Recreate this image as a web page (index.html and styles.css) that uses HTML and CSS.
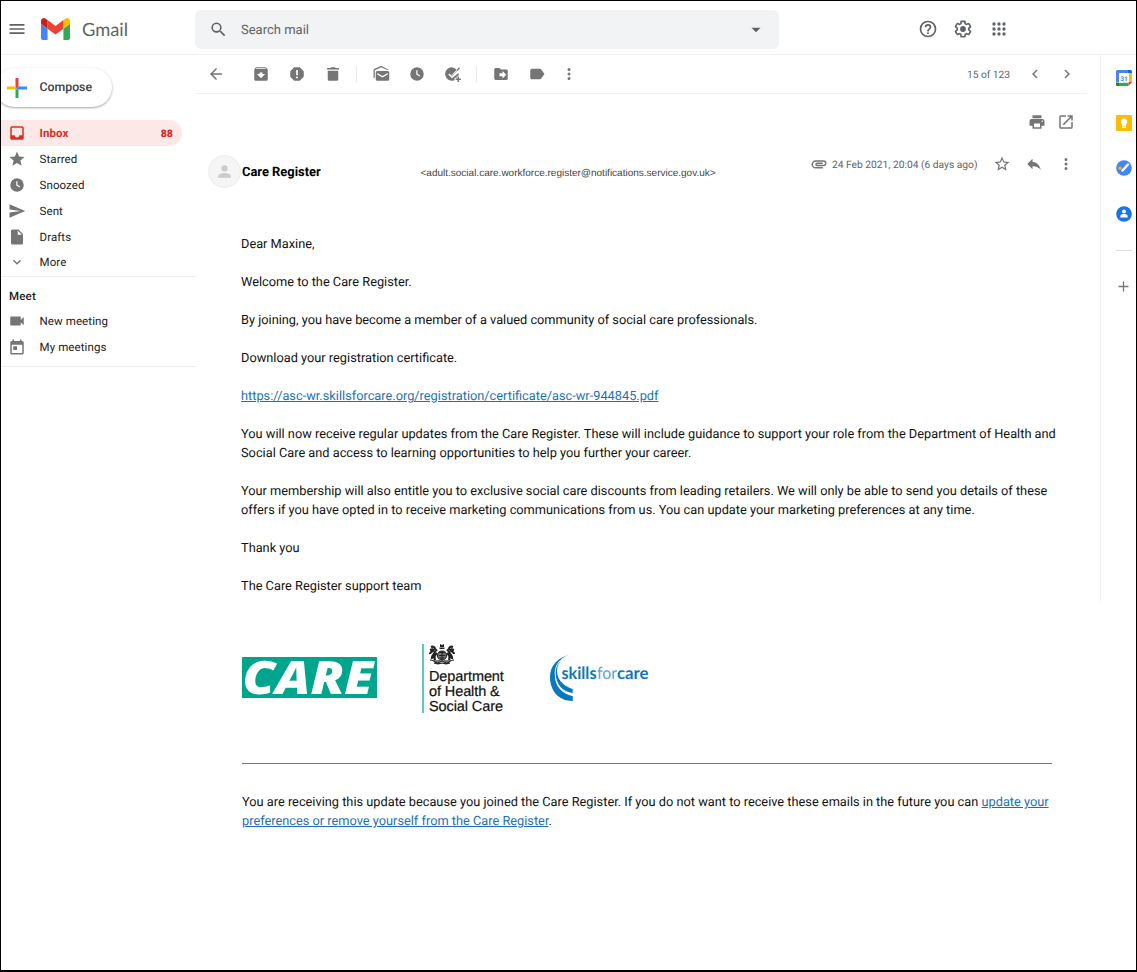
FILE: index.html
```html
<!DOCTYPE html>
<html lang="en">
<head>
<meta charset="utf-8">
<title>Gmail</title>
<link rel="stylesheet" href="styles.css">
</head>
<body>
<div class="window">
  <header class="header">
    <svg class="menu-icon" viewBox="0 0 24 24"><path d="M3 18h18v-2H3v2zm0-5h18v-2H3v2zm0-7v2h18V6H3z"/></svg>
    <svg class="logo" viewBox="52 42 88 66"><path fill="#4285f4" d="M58 108h14V74L52 59v43c0 3.32 2.69 6 6 6"/><path fill="#34a853" d="M120 108h14c3.32 0 6-2.69 6-6V59l-20 15"/><path fill="#fbbc04" d="M120 48v26l20-15v-8c0-7.42-8.47-11.65-14.4-7.2"/><path fill="#ea4335" d="M72 74V48l24 18 24-18v26L96 92"/><path fill="#c5221f" d="M52 51v8l20 15V48l-5.6-4.2c-5.94-4.45-14.4-.22-14.4 7.2"/></svg>
    <span class="brand">Gmail</span>
    <div class="search">
      <svg class="search-icon" viewBox="0 0 24 24"><path d="M15.5 14h-.79l-.28-.27A6.47 6.47 0 0 0 16 9.5 6.5 6.5 0 1 0 9.5 16c1.61 0 3.09-.59 4.23-1.57l.27.28v.79l5 4.99L20.49 19l-4.99-5zm-6 0A4.5 4.5 0 1 1 14 9.5 4.5 4.5 0 0 1 9.5 14z"/></svg>
      <span class="search-text">Search mail</span>
      <svg class="search-caret" viewBox="0 0 24 24"><path d="M6 9l6 6 6-6z"/></svg>
    </div>
    <nav class="header-tools">
      <svg class="tool" viewBox="0 0 24 24"><path d="M11 18h2v-2h-2v2zm1-16a10 10 0 1 0 0 20 10 10 0 0 0 0-20zm0 18a8 8 0 1 1 0-16 8 8 0 0 1 0 16zm0-14a4 4 0 0 0-4 4h2a2 2 0 1 1 4 0c0 2-3 1.750-3 5h2c0-2.250 3-2.500 3-5a4 4 0 0 0-4-4z"/></svg>
      <svg class="tool" viewBox="0 0 24 24"><path d="M13.850 22.250h-3.700c-.740 0-1.360-.540-1.450-1.270l-.270-1.890c-.270-.140-.530-.290-.790-.460l-1.800.720c-.700.260-1.470-.030-1.810-.650L2.200 15.530c-.350-.660-.200-1.440.360-1.880l1.530-1.190c-.010-.150-.020-.300-.020-.460 0-.150.010-.310.020-.460l-1.520-1.190c-.590-.450-.740-1.260-.370-1.880l1.850-3.190c.340-.620 1.110-.900 1.790-.630l1.810.730c.260-.170.520-.320.780-.460l.270-1.910c.090-.700.710-1.250 1.440-1.250h3.700c.740 0 1.360.540 1.450 1.270l.270 1.890c.270.140.530.290.790.460l1.800-.720c.710-.260 1.480.030 1.820.650l1.840 3.180c.360.660.200 1.440-.360 1.880l-1.520 1.190c.010.150.020.300.020.460s-.010.310-.020.460l1.520 1.190c.560.450.720 1.230.370 1.860l-1.860 3.220c-.340.620-1.110.900-1.800.630l-1.800-.720c-.260.170-.520.320-.780.460l-.270 1.910c-.100.680-.720 1.220-1.460 1.220zm-3.230-2h2.760l.370-2.550.530-.220c.440-.180.880-.440 1.340-.780l.450-.340 2.380.960 1.380-2.400-2.030-1.580.070-.560c.030-.260.060-.510.060-.780s-.030-.530-.060-.780l-.070-.560 2.030-1.580-1.390-2.400-2.390.960-.450-.350c-.420-.320-.870-.580-1.330-.770l-.520-.220-.370-2.550h-2.760l-.370 2.550-.530.210c-.440.190-.880.440-1.340.790l-.450.330-2.380-.950-1.390 2.390 2.030 1.580-.070.560a7 7 0 0 0 0 1.580l.070.560-2.030 1.580 1.380 2.400 2.390-.960.450.350c.430.330.860.580 1.330.770l.530.220z"/><circle cx="12" cy="12" r="3.500"/></svg>
      <svg class="tool" viewBox="0 0 24 24"><path d="M6 8a2 2 0 1 0 0-4 2 2 0 0 0 0 4zm6 0a2 2 0 1 0 0-4 2 2 0 0 0 0 4zm6 0a2 2 0 1 0 0-4 2 2 0 0 0 0 4zM6 14a2 2 0 1 0 0-4 2 2 0 0 0 0 4zm6 0a2 2 0 1 0 0-4 2 2 0 0 0 0 4zm6 0a2 2 0 1 0 0-4 2 2 0 0 0 0 4zM6 20a2 2 0 1 0 0-4 2 2 0 0 0 0 4zm6 0a2 2 0 1 0 0-4 2 2 0 0 0 0 4zm6 0a2 2 0 1 0 0-4 2 2 0 0 0 0 4z"/></svg>
    </nav>
  </header>

  <div class="columns">
    <aside class="sidebar">
      <div class="compose">
        <svg class="plus" viewBox="0 0 20 20"><path fill="#ea4335" d="M8.500 0h3v8.500l-3 3z"/><path fill="#fbbc04" d="M0 8.500h8.500v3H0z"/><path fill="#34a853" d="M8.500 11.500h3V20h-3z"/><path fill="#4285f4" d="M8.500 11.500l3-3H20v3z"/></svg>
        <span>Compose</span>
      </div>
      <ul class="folders">
        <li class="folder folder--active"><svg viewBox="0 0 24 24"><path d="M19 3H5a2 2 0 0 0-2 2v14c0 1.100.900 2 2 2h14a2 2 0 0 0 2-2V5a2 2 0 0 0-2-2zm0 12h-4a3 3 0 0 1-6 0H5V5h14v10z"/></svg><span>Inbox</span><b>88</b></li>
        <li class="folder"><svg viewBox="0 0 24 24"><path d="M12 17.270 18.180 21l-1.640-7.030L22 9.240l-7.190-.610L12 2 9.190 8.630 2 9.240l5.460 4.730L5.820 21z"/></svg><span>Starred</span></li>
        <li class="folder"><svg viewBox="0 0 24 24"><path fill-rule="evenodd" d="M12 3a9 9 0 1 0 0 18 9 9 0 0 0 0-18zm-1 4h1.600v4.700l3.600 2.200-.8 1.300L11 12.600z"/></svg><span>Snoozed</span></li>
        <li class="folder"><svg viewBox="0 0 24 24"><path d="M2.010 21 23 12 2.010 3 2 10l15 2-15 2z"/></svg><span>Sent</span></li>
        <li class="folder"><svg viewBox="0 0 24 24"><path d="M6 2a2 2 0 0 0-2 2v16c0 1.100.900 2 2 2h12a2 2 0 0 0 2-2V8l-6-6H6zm7 7V3.500L18.500 9H13z"/></svg><span>Drafts</span></li>
        <li class="folder folder--more"><svg class="small" viewBox="0 0 24 24"><path d="M16.590 8.590 12 13.170 7.410 8.590 6 10l6 6 6-6z"/></svg><span>More</span></li>
      </ul>
      <h2 class="meet-title">Meet</h2>
      <ul class="folders folders--meet">
        <li class="folder"><svg viewBox="0 0 24 24"><path d="M17 10.500V7a1 1 0 0 0-1-1H4a1 1 0 0 0-1 1v10a1 1 0 0 0 1 1h12a1 1 0 0 0 1-1v-3.500l4 4v-11z"/></svg><span>New meeting</span></li>
        <li class="folder"><svg viewBox="0 0 24 24"><path d="M19 4h-1V2h-2v2H8V2H6v2H5a2 2 0 0 0-2 2v14c0 1.100.900 2 2 2h14a2 2 0 0 0 2-2V6a2 2 0 0 0-2-2zm0 16H5V9h14v11zM7 11h5v5H7z"/></svg><span>My meetings</span></li>
      </ul>
    </aside>

    <main class="mail">
      <div class="toolbar">
        <span class="slot"><svg viewBox="0 0 24 24"><path d="M20 11H7.830l5.590-5.590L12 4l-8 8 8 8 1.410-1.410L7.830 13H20z"/></svg></span>
        <span class="slot slot--first"><svg viewBox="0 0 24 24"><path d="M20.540 5.230 19.150 3.550A1.450 1.450 0 0 0 18 3H6c-.470 0-.880.210-1.160.550L3.460 5.230C3.170 5.570 3 6.020 3 6.500V19a2 2 0 0 0 2 2h14a2 2 0 0 0 2-2V6.500c0-.480-.170-.930-.460-1.270zM12 17.500 6.500 12H10v-2h4v2h3.500zM5.120 5l.820-1h12l.940 1z"/></svg></span>
        <span class="slot"><svg viewBox="0 0 24 24"><path fill-rule="evenodd" d="M8.300 3h7.400L21 8.300v7.400L15.700 21H8.300L3 15.700V8.300zM10.900 6.500v7h2.200v-7zM12 15.200a1.300 1.300 0 1 0 0 2.600 1.300 1.300 0 0 0 0-2.600z"/></svg></span>
        <span class="slot"><svg viewBox="0 0 24 24"><path d="M5 19a2 2 0 0 0 2 2h10a2 2 0 0 0 2-2V7.500H5zM20 4h-4.500l-1-1h-5l-1 1H4v2h16z"/></svg></span>
        <span class="divider"></span>
        <span class="slot"><svg viewBox="0 0 24 24"><path d="M12.500 1 3.500 5A2 2 0 0 0 2 7v10h1.700V7.100l8.800-4 7.800 3.400h2.200zM7 8a2 2 0 0 0-2 2v9c0 1.100.900 2 2 2h14a2 2 0 0 0 2-2v-9a2 2 0 0 0-2-2zm14 4.500-7 4-7-4v-2l7 4 7-4z"/></svg></span>
        <span class="slot"><svg viewBox="0 0 24 24"><path fill-rule="evenodd" d="M12 3a9 9 0 1 0 0 18 9 9 0 0 0 0-18zm-1 4h1.600v4.700l3.600 2.200-.8 1.300L11 12.600z"/></svg></span>
        <span class="slot"><svg viewBox="0 0 24 24"><path d="M10.500 3a9 9 0 1 0 3.500 17.300V17h3v-2h2a9 9 0 0 0 .4-4.500l-8.900 7-4.700-4.700 1.400-1.400 3.300 3.300 7-7A9 9 0 0 0 10.500 3zM20 3l1.400 1.400-10.900 11-1-1zM18 15.500h2V18h2.500v2H20v2.500h-2V20h-2.500v-2H18z"/></svg></span>
        <span class="divider"></span>
        <span class="slot"><svg viewBox="0 0 24 24"><path d="M20 6h-8l-2-2H5a2 2 0 0 0-2 2v12c0 1.100.900 2 2 2h14a2 2 0 0 0 2-2V8a2 2 0 0 0-1-2zm-6 12v-3h-4v-4h4V8l5 5z"/></svg></span>
        <span class="slot"><svg viewBox="0 0 24 24"><path d="M17.630 5.840A2 2 0 0 0 16 5H5a2 2 0 0 0-2 2v10c0 1.100.900 2 2 2h11c.670 0 1.270-.330 1.630-.840L22 12z"/></svg></span>
        <span class="slot slot--more"><svg viewBox="0 0 24 24"><path d="M12 8a2 2 0 1 0 0-4 2 2 0 0 0 0 4zm0 6a2 2 0 1 0 0-4 2 2 0 0 0 0 4zm0 6a2 2 0 1 0 0-4 2 2 0 0 0 0 4z"/></svg></span>
        <span class="count">15 of 123</span>
        <span class="pager"><svg viewBox="0 0 24 24"><path d="M15.410 7.410 14 6l-6 6 6 6 1.410-1.410L10.830 12z"/></svg><svg viewBox="0 0 24 24"><path d="M10 6 8.590 7.410 13.170 12l-4.580 4.590L10 18l6-6z"/></svg></span>
      </div>

      <div class="mail-actions">
        <svg viewBox="0 0 24 24"><path d="M19 8H5a3 3 0 0 0-3 3v6h4v4h12v-4h4v-6a3 3 0 0 0-3-3zm-3 11H8v-5h8v5zm3-7a1 1 0 1 1 0-2 1 1 0 0 1 0 2zm-1-9H6v4h12V3z"/></svg>
        <svg viewBox="0 0 24 24"><path d="M19 19H5V5h7V3H5a2 2 0 0 0-2 2v14c0 1.100.900 2 2 2h14a2 2 0 0 0 2-2v-7h-2v7zM14 3v2h3.590l-9.830 9.830 1.410 1.410L19 6.410V10h2V3z"/></svg>
      </div>

      <div class="sender">
        <span class="avatar"><svg viewBox="0 0 24 24"><path d="M12 12a4 4 0 1 0 0-8 4 4 0 0 0 0 8zm0 2c-2.670 0-8 1.340-8 4v2h16v-2c0-2.660-5.330-4-8-4z"/></svg></span>
        <strong class="name">Care Register</strong>
        <span class="address">&lt;adult.social.care.workforce.register@notifications.service.gov.uk&gt;</span>
        <div class="meta">
          <svg class="clip" viewBox="0 0 24 24"><path d="M2 12.500A5.500 5.500 0 0 1 7.500 7H18a4 4 0 1 1 0 8H9.500a2.500 2.500 0 0 1 0-5H17v2H9.410c-.550 0-.550 1 0 1H18a2 2 0 1 0 0-4H7.500a3.500 3.500 0 1 0 0 7H17v2H7.500A5.500 5.500 0 0 1 2 12.500z"/></svg>
          <span class="date">24 Feb 2021, 20:04 (6 days ago)</span>
          <span class="meta-icons">
            <svg viewBox="0 0 24 24"><path d="M22 9.240l-7.190-.620L12 2 9.190 8.630 2 9.240l5.460 4.730L5.820 21 12 17.270 18.180 21l-1.630-7.030zM12 15.400l-3.760 2.270 1-4.280-3.320-2.880 4.380-.380L12 6.100l1.710 4.040 4.380.380-3.320 2.880 1 4.280z"/></svg>
            <svg viewBox="0 0 24 24"><path d="M10 9V5l-7 7 7 7v-4.100c5 0 8.500 1.600 11 5.100-1-5-4-10-11-11z"/></svg>
            <svg viewBox="0 0 24 24"><path d="M12 8a2 2 0 1 0 0-4 2 2 0 0 0 0 4zm0 6a2 2 0 1 0 0-4 2 2 0 0 0 0 4zm0 6a2 2 0 1 0 0-4 2 2 0 0 0 0 4z"/></svg>
          </span>
        </div>
      </div>

      <article class="message">
        <p>Dear Maxine,</p>
        <p>Welcome to the Care Register.</p>
        <p>By joining, you have become a member of a valued community of social care professionals.</p>
        <p>Download your registration certificate.</p>
        <p><a>https://asc-wr.skillsforcare.org/registration/certificate/asc-wr-944845.pdf</a></p>
        <p>You will now receive regular updates from the Care Register. These will include guidance to support your role from the Department of Health and<br>Social Care and access to learning opportunities to help you further your career.</p>
        <p>Your membership will also entitle you to exclusive social care discounts from leading retailers. We will only be able to send you details of these<br>offers if you have opted in to receive marketing communications from us. You can update your marketing preferences at any time.</p>
        <p>Thank you</p>
        <p>The Care Register support team</p>
      </article>

      <div class="partners">
        <svg class="care-logo" viewBox="0 0 135 41"><rect width="135" height="41" fill="#00a58e"/><text x="0.500" y="37" textLength="131" lengthAdjust="spacingAndGlyphs">CARE</text></svg>
        <div class="dhsc">
          <svg class="crest" viewBox="0 0 26 21" fill="none" stroke="#222" stroke-width="1.100"><path fill="#222" stroke="none" d="M11 0l2 1 2-1v3h-4zM10.500 3.500h5V5h-5z"/><circle cx="13" cy="11.500" r="4.500" fill="#777"/><path d="M10 8.500h6M10 11.500h6M13 7v9M10.500 14h5"/><path stroke-width="2.100" d="M2 3c2-1 4 0 4 2l2 2M5 5c0 3-4 2-4 5M6 7c0 4-4 4-3 8M8 9l-3 3 1 5M1 6l3-1M24 3c-2-1-4 0-4 2l-2 2M21 5c0 3 4 2 4 5M20 7c0 4 4 4 3 8M18 9l3 3-1 5M25 6l-3-1"/><path d="M1 16c5 0 4 3 8 3l4-2 4 2c4 0 3-3 8-3M5 19l4 1 4-1 4 1 4-1"/></svg>
          <span>Department</span><span>of Health &amp;</span><span>Social Care</span>
        </div>
        <svg class="sfc-logo" viewBox="0 0 100 48"><g fill="#0a78be"><path d="M22.500 0C7 3 0 12 0 23c0 13 8 24 22.800 24v-4.800C12 40 5 32 5 22 5 11 11 3 22.500 0z"/><path stroke="#fff" stroke-width=".9" d="M20 .8C10 4 5.200 11 5.200 19c0 11 7 19.600 18 20.500v-4.800C14 32 7.500 26 7.500 17c0-7 4-13 12.500-16.200z"/></g><text class="sfc-bold" x="11.500" y="24.500" textLength="35" lengthAdjust="spacingAndGlyphs">skills</text><text class="sfc-light" x="47" y="24.500" textLength="20" lengthAdjust="spacingAndGlyphs">for</text><text class="sfc-bold" x="67" y="24.500" textLength="31.500" lengthAdjust="spacingAndGlyphs">care</text></svg>
      </div>

      <footer class="footnote">You are receiving this update because you joined the Care Register. If you do not want to receive these emails in the future you can <a>update your</a><br><a>preferences or remove yourself from the Care Register</a>.</footer>
    </main>

    <aside class="apps">
      <svg viewBox="0 0 16 16"><path fill="#fff" d="M3 3h10v10H3z"/><path fill="#4285f4" d="M1.500 0H12v3H3v9H0V1.500A1.500 1.500 0 0 1 1.500 0z"/><path fill="#1967d2" d="M12 0h2.500A1.500 1.500 0 0 1 16 1.500V3h-4z"/><path fill="#fbbc04" d="M13 3h3v9h-3z"/><path fill="#188038" d="M0 12.500h3V16H1.500A1.500 1.500 0 0 1 0 14.500z"/><path fill="#34a853" d="M3 12.800h9.500V16H3z"/><path fill="#ea4335" d="M12.500 12H16l-3.500 4z"/><text class="cal-day" x="8" y="10.700">31</text></svg>
      <svg viewBox="0 0 16 16"><rect width="16" height="16" rx="1.500" fill="#fbbc04"/><path fill="#fff" d="M8 3.500a3.400 3.400 0 0 0-2 6.100V11h4V9.600a3.400 3.400 0 0 0-2-6.100zM6 11.600h4v1.200H6z"/></svg>
      <svg viewBox="0 0 16 16"><circle cx="8" cy="8" r="7.800" fill="#4285f4"/><path stroke="#fff" stroke-width="2.500" stroke-linecap="round" d="M6.500 10.500l5.500-6"/><circle cx="4" cy="8.200" r="1.600" fill="#fbbc04"/></svg>
      <svg viewBox="0 0 16 16"><circle cx="8" cy="8" r="7.800" fill="#1a73e8"/><circle cx="8" cy="5.500" r="1.900" fill="#fff"/><path fill="#fff" d="M4.300 11.500V10c0-1.500 2.200-2 3.700-2s3.700.5 3.700 2v1.500z"/></svg>
      <span class="apps-rule"></span>
      <svg class="add" viewBox="0 0 24 24"><path d="M19 12.900h-6.100V19h-1.800v-6.100H5v-1.800h6.100V5h1.800v6.100H19z"/></svg>
    </aside>
  </div>
</div>
</body>
</html>
```
FILE: styles.css
```css
* { box-sizing: border-box; }
body { margin: 0; background: #fff; color: #202124; font-family: Roboto, "Liberation Sans", sans-serif; text-rendering: geometricPrecision; }
svg { display: block; flex: none; fill: #757575; }
.window { width: 1137px; height: 972px; overflow: hidden; border: 1px solid #000; border-bottom-width: 2px; }

.header { display: flex; align-items: center; height: 54px; padding: 4px 0 0 6px; border-bottom: 1px solid #f1f1f1; }
.header svg { fill: #5f6368; }
.menu-icon { width: 20px; height: 20px; margin-bottom: 1px; }
.logo { width: 29px; height: 22px; margin: 0 0 1px 14px; }
.brand { width: 113px; margin: 0 0 2px 12px; font: 18.300px/24px Lato, sans-serif; color: #5f6368; }
.search { display: flex; align-items: center; width: 584px; height: 39px; padding: 0 14px; border-radius: 6px; background: #f1f3f4; }
.search-icon { width: 19px; height: 19px; }
.search-text { flex: 1; margin-left: 13px; padding-top: 2px; font-size: 13px; color: #5f6368; }
.search-caret { width: 18px; height: 18px; }
.header-tools { display: flex; gap: 15.500px; margin: 0 0 1px 138.500px; }
.tool { width: 20px; height: 20px; }

.columns { display: flex; }
.sidebar { width: 195px; padding-top: 13px; }
.compose { display: flex; align-items: center; width: 117px; height: 39px; margin: 0 0 13px -6px; padding-left: 12px; border-radius: 20px; box-shadow: 0 1px 2px rgba(60,64,67,.35), 0 1px 3px rgba(60,64,67,.15); font-size: 12.300px; font-weight: 500; color: #3c4043; }
.compose span { padding-top: 1px; }
.plus { width: 20px; height: 20px; margin-right: 12.500px; }
.folders { margin: 0; padding: 0; list-style: none; border-bottom: 1px solid #eee; }
.folders--meet { padding-bottom: 6px; }
.folder { display: flex; align-items: center; width: 181px; height: 26px; padding: 0 9px 1px 7px; font-size: 11.500px; letter-spacing: .1px; }
.folder svg { width: 18px; height: 18px; margin-right: 13.500px; }
.folder .small { width: 16px; height: 16px; margin: 0 14.500px 0 1px; }
.folder span { flex: 1; }
.folder--more { padding-bottom: 2px; }
.folder--active { padding-bottom: 0; border-radius: 0 13px 13px 0; background: #fce8e6; color: #d93025; font-weight: 700; }
.folder--active svg { fill: #d93025; }
.folder b { font-size: 10.500px; }
.meet-title { height: 31px; margin: 0; padding: 5px 0 0 8px; font-size: 11.500px; font-weight: 500; line-height: 28px; letter-spacing: .2px; }

.mail { width: 892px; margin-left: -1px; }
.toolbar { display: flex; align-items: center; height: 39px; padding-left: 3px; border-bottom: 1px solid #f1f1f1; }
.slot { display: flex; flex: none; justify-content: center; width: 36px; }
.slot svg, .mail-actions svg, .pager svg { width: 18px; height: 18px; }
.slot--first { margin-left: 9px; }
.slot--more { width: 28px; }
.divider { flex: none; width: 1px; height: 16px; margin: 0 6px 0 5px; background: #e8e8e8; }
.count { width: 58.500px; margin-left: auto; padding-top: 2px; font-size: 10.200px; color: #5f6368; }
.pager { display: flex; gap: 14px; padding-right: 11.500px; }
.mail-actions { display: flex; align-items: center; justify-content: flex-end; gap: 11px; height: 55px; padding-right: 12px; }

.sender { display: flex; align-items: center; height: 45px; padding-left: 13px; }
.avatar { display: flex; align-items: center; justify-content: center; width: 33px; height: 33px; border: 1px solid #ececec; border-radius: 50%; background: #f5f5f5; }
.avatar svg { width: 19px; height: 19px; fill: #ccc; }
.name { width: 178.500px; margin-left: 1px; padding-top: 2px; font-size: 12.900px; color: #000; }
.address { padding-top: 4px; font: 10px/14px "Liberation Sans", sans-serif; color: #444; }
.meta { display: flex; align-items: center; align-self: flex-start; height: 29px; margin-left: auto; padding-right: 12px; }
.clip { width: 18px; height: 18px; margin-right: 4px; }
.date { padding-top: 1.500px; font-size: 10.260px; color: #5f6368; }
.meta-icons { display: flex; gap: 14px; margin-left: 15.500px; }
.meta-icons svg { width: 18px; height: 18px; }

.message { height: 450px; padding: 41px 0 0 46px; font-size: 12.790px; line-height: 19px; color: #111; white-space: nowrap; }
.message p { margin: 0 0 19px; }
a { color: #1d70b8; text-decoration: underline; }

.partners { display: flex; align-items: flex-start; height: 119px; padding-left: 47px; }
.care-logo { overflow: visible; width: 135px; height: 41px; margin-top: 13px; }
.care-logo text { font: italic 800 46px "Open Sans", sans-serif; fill: #fff; }
.dhsc { display: flex; flex-direction: column; width: 90px; height: 69px; margin-left: 45px; padding-left: 5px; border-left: 2px solid #5fc9b8; font: 14.500px/15.300px "Liberation Sans", sans-serif; color: #111; letter-spacing: -.1px; white-space: nowrap; -webkit-text-stroke: .2px #111; }
.crest { width: 26px; height: 21px; margin-bottom: 4.600px; }
.sfc-logo { width: 100px; height: 48px; margin: 10px 0 0 38px; }
.sfc-logo text { font: 400 17px Lato, sans-serif; fill: #5aa3d6; }
.sfc-logo .sfc-bold { font-weight: 700; fill: #0a78be; }

.footnote { width: 810px; margin-left: 47px; padding-top: 29px; border-top: 1px solid #777; font-size: 12.790px; line-height: 19px; color: #111; white-space: nowrap; }

.apps { display: flex; flex-direction: column; align-items: center; width: 36px; height: 547px; margin-left: 13px; padding: 14.500px 0 0 10px; border-left: 1px solid #f3f3f3; }
.apps svg { width: 16px; height: 16px; margin-bottom: 29.400px; }
.cal-day { font: 700 6.500px Roboto, sans-serif; fill: #4285f4; text-anchor: middle; }
.apps-rule { width: 16px; height: 1px; margin: -1.500px 0 27.500px; background: #ddd; }
.apps .add { width: 17px; height: 17px; margin: 0; }
```
